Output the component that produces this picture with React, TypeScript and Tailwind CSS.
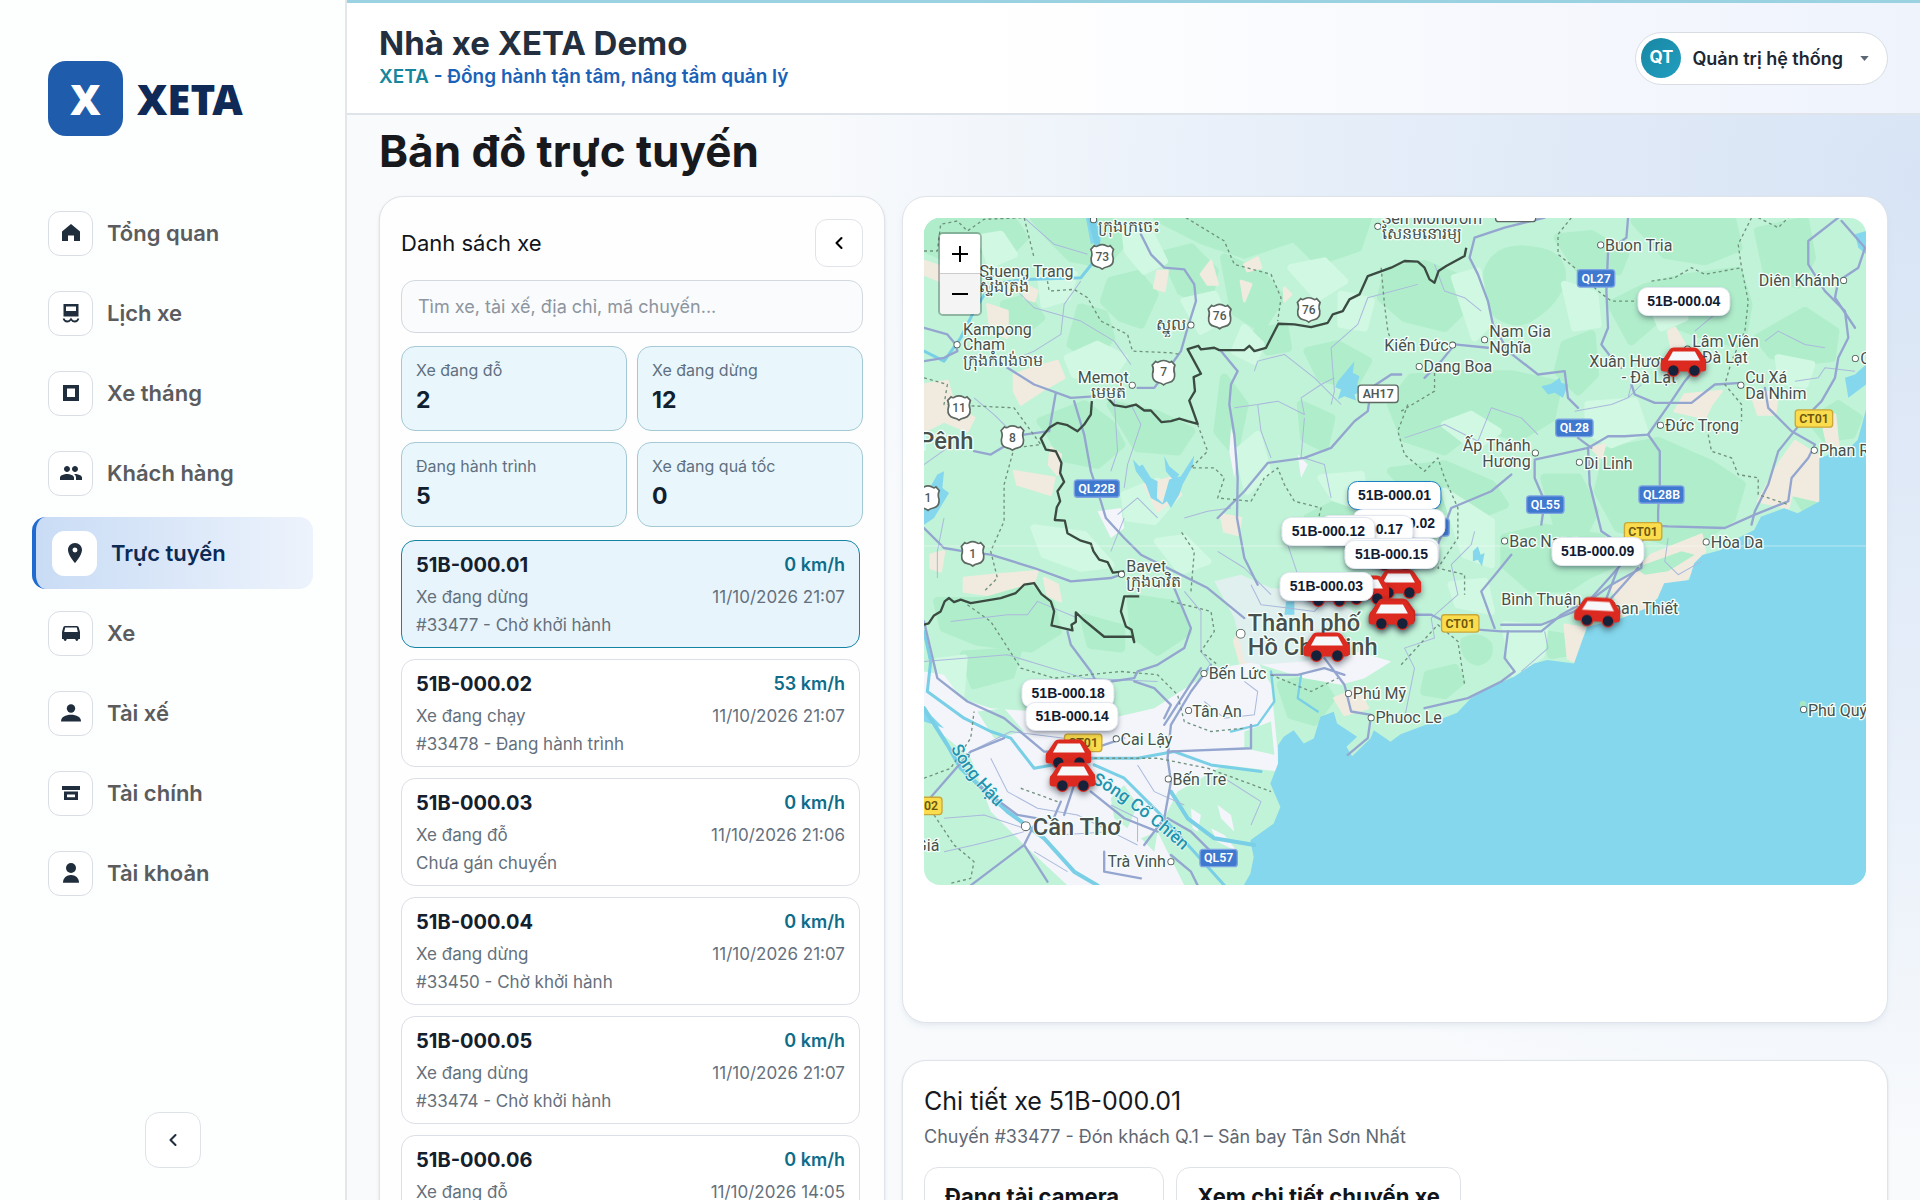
import React, { useState } from 'react';
import { ChevronLeft } from 'lucide-react';
import { MdPeople, MdPlace } from 'react-icons/md';

interface Vehicle {
  plate: string;
  speed: number;
  status: string;
  time: string;
  trip: string;
}

const vehicles: Vehicle[] = [
  { plate: '51B-000.01', speed: 0, status: 'Xe đang dừng', time: '11/10/2026 21:07', trip: '#33477 - Chờ khởi hành' },
  { plate: '51B-000.02', speed: 53, status: 'Xe đang chạy', time: '11/10/2026 21:07', trip: '#33478 - Đang hành trình' },
  { plate: '51B-000.03', speed: 0, status: 'Xe đang đỗ', time: '11/10/2026 21:06', trip: 'Chưa gán chuyến' },
  { plate: '51B-000.04', speed: 0, status: 'Xe đang dừng', time: '11/10/2026 21:07', trip: '#33450 - Chờ khởi hành' },
  { plate: '51B-000.05', speed: 0, status: 'Xe đang dừng', time: '11/10/2026 21:07', trip: '#33474 - Chờ khởi hành' },
  { plate: '51B-000.06', speed: 0, status: 'Xe đang đỗ', time: '11/10/2026 14:05', trip: 'Chưa gán chuyến' },
];

const stats = [
  { label: 'Xe đang đỗ', value: 2 },
  { label: 'Xe đang dừng', value: 12 },
  { label: 'Đang hành trình', value: 5 },
  { label: 'Xe đang quá tốc', value: 0 },
];

const Glyph: React.FC<{ children: React.ReactNode }> = ({ children }) => (
  <svg viewBox="0 0 24 24" className="h-6 w-6" fill="currentColor" aria-hidden="true">
    {children}
  </svg>
);

const navItems = [
  { label: 'Tổng quan', icon: <Glyph><path d="M12 3 3 10.500V20h6v-5.500h6V20h6v-9.500z" /></Glyph> },
  {
    label: 'Lịch xe',
    icon: (
      <Glyph>
        <path fillRule="evenodd" d="M4.5 3h15v12.5h-15zM7 5.5V10h10V5.5z" />
        <path d="M4.500 17.500q1 3 3.700 3 2.300 0 3.800-2.300 1.500 2.300 3.800 2.300 2.700 0 3.700-3" fill="none" stroke="currentColor" strokeWidth="1.800" />
      </Glyph>
    ),
  },
  { label: 'Xe tháng', icon: <Glyph><path fillRule="evenodd" d="M4 4h16v16H4zM8 7.5v8.5h8V7.5z" /></Glyph> },
  { label: 'Khách hàng', icon: <MdPeople className="h-6 w-6" /> },
  { label: 'Trực tuyến', icon: <MdPlace className="h-6 w-6" /> },
  {
    label: 'Xe',
    icon: (
      <Glyph>
        <path fillRule="evenodd" d="M6 5h12a2 2 0 0 1 1.8 1.4L21 11v7h-1.5l-.6 1.2a1.2 1.2 0 0 1-2.2 0L16.200 18H7.800l-.5 1.200a1.200 1.200 0 0 1-2.200 0L4.500 18H3v-7l1.200-4.600A2 2 0 0 1 6 5zm.2 1.600L5.200 11h13.600l-1-4.400z" />
      </Glyph>
    ),
  },
  { label: 'Tài xế', icon: <Glyph><circle cx="12" cy="7.500" r="4.200" /><path d="M2 20.500c0-4.500 4.500-6.700 10-6.700s10 2.200 10 6.700z" /></Glyph> },
  { label: 'Tài chính', icon: <Glyph><path fillRule="evenodd" d="M3 5h18v4H3zM5 10.500h14V19H5zM8 13.500v2.800h8v-2.800z" /></Glyph> },
  { label: 'Tài khoản', icon: <Glyph><circle cx="12" cy="7" r="5" /><path d="M4 21.800c0-5 3.500-7.800 8-7.800s8 2.800 8 7.800z" /></Glyph> },
];

const Logo = () => (
  <div className="flex items-center gap-[14px] pl-4">
    <div className="flex h-[75px] w-[75px] items-center justify-center rounded-[18px] bg-[#1f5cab] font-['Noto_Sans',sans-serif] text-[42px] font-black text-white">
      X
    </div>
    <span className="font-['Noto_Sans',sans-serif] text-[42px] font-black text-[#0f2a56]">XETA</span>
  </div>
);

const Sidebar = () => (
  <aside className="flex h-full w-[347px] shrink-0 flex-col border-r-2 border-[#e3e7ea] bg-[#fdfefe] px-8 pt-[61px] pb-8">
    <Logo />
    <nav className="mt-[61px] flex flex-col gap-2">
      {navItems.map((item) => {
        const active = item.label === 'Trực tuyến';
        return (
          <a
            key={item.label}
            href="#"
            className={`flex h-[72px] items-center gap-[14px] rounded-[14px] pl-4 text-[22px] font-semibold ${
              active
                ? 'border-l-4 border-[#1f6bd0] bg-gradient-to-r from-[#c9dcf5] to-[#edf3fc] text-[#0b2a55]'
                : 'text-[#5a5c5e]'
            }`}
          >
            <span
              className={`flex h-[45px] w-[45px] items-center justify-center rounded-xl border bg-white text-[#1f2d3d] ${
                active ? 'border-white' : 'border-[#d9dee4]'
              }`}
            >
              {item.icon}
            </span>
            {item.label}
          </a>
        );
      })}
    </nav>
    <button
      aria-label="Thu gọn menu"
      className="mt-auto flex h-14 w-14 items-center justify-center self-center rounded-[14px] border border-[#dfe3e7] bg-white text-[#1f2d3d]"
    >
      <ChevronLeft className="h-5 w-5" strokeWidth={2.5} />
    </button>
  </aside>
);

const Header = () => (
  <header className="flex h-[115px] shrink-0 items-center justify-between border-t-[3px] border-b-2 border-t-[#9ad2e2] border-b-[#dfe3ea] bg-gradient-to-r from-white from-40% to-[#eff3fc] px-8">
    <div className="pt-[2px]">
      <div className="text-[33px] leading-9 font-bold text-[#232f3e]">Nhà xe XETA Demo</div>
      <div className="text-[19px] leading-8 font-semibold text-[#1a62b8]">
        <span className="text-[#15869c]">XETA</span> - Đồng hành tận tâm, nâng tầm quản lý
      </div>
    </div>
    <button className="flex h-[53px] items-center gap-[11px] rounded-full border border-[#d8dde4] bg-white pr-[18px] pl-[5px] text-[18px] font-semibold text-[#1c2733]">
      <span className="flex h-10 w-10 items-center justify-center rounded-full bg-gradient-to-br from-[#1787a3] to-[#229ec0] text-[17px] font-bold text-white">
        QT
      </span>
      Quản trị hệ thống
      <svg viewBox="0 0 10 6" className="ml-[6px] h-[5px] w-[9px] fill-[#5b6773]" aria-hidden="true">
        <path d="M0 0h10L5 6z" />
      </svg>
    </button>
  </header>
);

interface VehicleListProps {
  selected: string;
  onSelect: (plate: string) => void;
}

const VehicleList: React.FC<VehicleListProps> = ({ selected, onSelect }) => {
  const [query, setQuery] = useState('');

  return (
    <section className="flex flex-col gap-[13px] rounded-3xl border border-[#dfe3ea] bg-[#fefefe] px-[21px] pt-[22px] pb-6 shadow-sm">
      <div className="flex items-center justify-between">
        <h2 className="text-[22px] text-[#111418]">Danh sách xe</h2>
        <button aria-label="Thu gọn danh sách" className="flex h-12 w-12 items-center justify-center rounded-xl border border-[#e0e3e7] bg-white">
          <ChevronLeft className="h-5 w-5" strokeWidth={2.5} />
        </button>
      </div>
      <input
        type="text"
        aria-label="Tìm xe"
        value={query}
        onChange={(e) => setQuery(e.target.value)}
        placeholder="Tìm xe, tài xế, địa chỉ, mã chuyến..."
        className="h-[53px] w-full rounded-[14px] border border-[#d3d9df] bg-[#f9fbfd] px-4 text-[18px] placeholder:text-[#8d959d]"
      />
      <div className="grid grid-cols-2 gap-x-[10px] gap-y-[11px]">
        {stats.map((stat) => (
          <button key={stat.label} className="flex h-[85px] flex-col gap-1 rounded-[14px] border border-[#a3c9d4] bg-[#e9f7fd] px-[14px] pt-[11px] text-left">
            <span className="text-[16px] leading-6 text-[#5f7080]">{stat.label}</span>
            <span className="text-[23px] leading-7 font-bold text-[#10202e]">{stat.value}</span>
          </button>
        ))}
      </div>
      <ul className="flex flex-col gap-[11px] pr-[3px]">
        {vehicles.map((v) => (
          <li key={v.plate}>
            <button
              onClick={() => onSelect(v.plate)}
              className={`flex w-full flex-col rounded-[14px] border px-[14px] py-[10px] text-left text-[17px] leading-6 text-[#65707d] ${
                v.plate === selected ? 'border-[#1583a3] bg-[#e7f4fc]' : 'border-[#dcdfe7] bg-white'
              }`}
            >
              <span className="flex w-full items-center justify-between leading-7">
                <span className="text-[20px] font-bold text-[#14202c]">{v.plate}</span>
                <span className="text-[18px] font-semibold text-[#0f6c89]">{v.speed} km/h</span>
              </span>
              <span className="mt-[6px] flex w-full justify-between">
                <span>{v.status}</span>
                <span>{v.time}</span>
              </span>
              <span className="mt-1">{v.trip}</span>
            </button>
          </li>
        ))}
      </ul>
    </section>
  );
};

// Map space: one unit is a third of a pixel at the natural 941x667 size.
const MAP_W = 941;
const MAP_H = 667;

interface Place {
  x: number;
  y: number;
  text: string;
  anchor?: 'start' | 'end' | 'middle';
  big?: boolean;
  dot?: [number, number];
}

const places: Place[] = [
  { x: 166, y: 178, text: 'Stueng Trang' },
  { x: 166, y: 224, text: 'ស្ទឹងត្រង់' },
  { x: 522, y: 44, text: 'ក្រុងក្រចេះ', dot: [508, 6] },
  { x: 117, y: 351, text: 'Kampong' },
  { x: 117, y: 398, text: 'Cham', dot: [99, 381] },
  { x: 117, y: 444, text: 'ក្រុងកំពង់ចាម' },
  { x: 694, y: 336, text: 'ស្នួល', dot: [800, 322] },
  { x: 461, y: 495, text: 'Memot', dot: [624, 502] },
  { x: 499, y: 540, text: 'មេមត់' },
  { x: -14, y: 694, text: 'Pênh', big: true },
  { x: 1372, y: 20, text: 'Sen Monorom', dot: [1360, 26] },
  { x: 1372, y: 64, text: 'សែនមនោរម្យ' },
  { x: 2041, y: 99, text: 'Buon Tria', dot: [2028, 82] },
  { x: 2744, y: 206, text: 'Diên Khánh', anchor: 'end', dot: [2756, 188] },
  { x: 1694, y: 359, text: 'Nam Gia', dot: [1680, 366] },
  { x: 1694, y: 406, text: 'Nghĩa' },
  { x: 1572, y: 400, text: 'Kiến Đức', anchor: 'end', dot: [1584, 382] },
  { x: 1497, y: 464, text: 'Dang Boa', dot: [1484, 446] },
  { x: 1994, y: 447, text: 'Xuân Hương' },
  { x: 2254, y: 496, text: '- Đà Lạt', anchor: 'end' },
  { x: 2302, y: 387, text: 'Lâm Viên', dot: [2288, 394] },
  { x: 2331, y: 436, text: 'Đà Lạt' },
  { x: 2461, y: 496, text: 'Cu Xá', dot: [2448, 502] },
  { x: 2461, y: 543, text: 'Da Nhim' },
  { x: 2806, y: 440, text: 'Cam', dot: [2791, 422] },
  { x: 2221, y: 640, text: 'Đức Trọng', dot: [2207, 622] },
  { x: 2682, y: 715, text: 'Phan Rang', dot: [2668, 697] },
  { x: 1818, y: 698, text: 'Ấp Thánh', anchor: 'end', dot: [1832, 705] },
  { x: 1818, y: 748, text: 'Hương', anchor: 'end' },
  { x: 1978, y: 752, text: 'Di Linh', dot: [1964, 733] },
  { x: 1754, y: 987, text: 'Bac Nang', dot: [1740, 969] },
  { x: 2358, y: 991, text: 'Hòa Da', dot: [2344, 972] },
  { x: 1730, y: 1160, text: 'Bình Thuận' },
  { x: 2260, y: 1187, text: 'Phan Thiết', anchor: 'end' },
  { x: 2649, y: 1492, text: 'Phú Quý', dot: [2636, 1474] },
  { x: 606, y: 1063, text: 'Bavet', dot: [592, 1069] },
  { x: 606, y: 1108, text: 'ក្រុងបាវិត' },
  { x: 970, y: 1238, text: 'Thành phố', big: true, dot: [949, 1247] },
  { x: 970, y: 1310, text: 'Hồ Chí Minh', big: true },
  { x: 853, y: 1384, text: 'Bến Lức', dot: [839, 1366] },
  { x: 804, y: 1495, text: 'Tân An', dot: [793, 1477] },
  { x: 1285, y: 1442, text: 'Phú Mỹ', dot: [1272, 1426] },
  { x: 1353, y: 1514, text: 'Phuoc Le', dot: [1340, 1499] },
  { x: 589, y: 1579, text: 'Cai Lậy', dot: [576, 1562] },
  { x: 745, y: 1699, text: 'Bến Tre', dot: [732, 1682] },
  { x: 326, y: 1850, text: 'Cần Thơ', big: true, dot: [305, 1824] },
  { x: 725, y: 1947, text: 'Trà Vinh', anchor: 'end', dot: [740, 1930] },
  { x: 46, y: 1899, text: 'Giá', anchor: 'end' },
];

const shields: { x: number; y: number; text: string; kind: 'blue' | 'yellow' | 'white' | 'us' }[] = [
  { x: 534, y: 117, text: '73', kind: 'us' },
  { x: 886, y: 296, text: '76', kind: 'us' },
  { x: 1153, y: 276, text: '76', kind: 'us' },
  { x: 718, y: 464, text: '7', kind: 'us' },
  { x: 105, y: 570, text: '11', kind: 'us' },
  { x: 265, y: 660, text: '8', kind: 'us' },
  { x: 12, y: 840, text: '1', kind: 'us' },
  { x: 146, y: 1007, text: '1', kind: 'us' },
  { x: 1361, y: 528, text: 'AH17', kind: 'white' },
  { x: 1773, y: -14, text: 'AH17', kind: 'white' },
  { x: 518, y: 812, text: 'QL22B', kind: 'blue' },
  { x: 2014, y: 182, text: 'QL27', kind: 'blue' },
  { x: 1949, y: 630, text: 'QL28', kind: 'blue' },
  { x: 2210, y: 830, text: 'QL28B', kind: 'blue' },
  { x: 1862, y: 860, text: 'QL55', kind: 'blue' },
  { x: 1518, y: 928, text: 'QL20', kind: 'blue' },
  { x: 883, y: 1919, text: 'QL57', kind: 'blue' },
  { x: 2667, y: 602, text: 'CT01', kind: 'yellow' },
  { x: 2155, y: 940, text: 'CT01', kind: 'yellow' },
  { x: 1607, y: 1216, text: 'CT01', kind: 'yellow' },
  { x: 477, y: 1574, text: 'CT01', kind: 'yellow' },
  { x: -2, y: 1763, text: 'CT02', kind: 'yellow' },
];

const Shield: React.FC<(typeof shields)[number]> = ({ x, y, text, kind }) => {
  if (kind === 'us') {
    return (
      <g transform={`translate(${x} ${y})`}>
        <path
          d="M-24-33Q-18-28-12-33Q-6-36 0-36Q6-36 12-33Q18-28 24-33L34-22Q28-10 33 4Q35 26 16 30Q6 32 0 37Q-6 32-16 30Q-35 26-33 4Q-28-10-34-22Z"
          fill="#fff"
          stroke="#5d6862"
          strokeWidth="5"
        />
        <text y="12" textAnchor="middle" fontSize="36" fontWeight="500" fill="#4f5a56">{text}</text>
      </g>
    );
  }
  const w = kind === 'white' ? 120 : text.length * 23 + 20;
  const fill = kind === 'blue' ? '#3f78cf' : kind === 'yellow' ? '#fbdc4c' : '#fff';
  const edge = kind === 'blue' ? '#7ea4e4' : kind === 'yellow' ? '#c9a83a' : '#5d6862';
  const ink = kind === 'blue' ? '#fff' : kind === 'yellow' ? '#6b560e' : '#4f5a56';
  return (
    <g transform={`translate(${x} ${y})`}>
      <rect x={-w / 2} y={-26} width={w} height={52} rx={9} fill={fill} stroke={edge} strokeWidth="4" />
      <text y="13" textAnchor="middle" fontSize="37" fontWeight="600" fill={ink}>{text}</text>
    </g>
  );
};

const MapCanvas = () => (
  <svg
    viewBox="0 0 2823 2001"
    preserveAspectRatio="xMidYMid slice"
    className="block h-[667px] w-full font-[Roboto,'Noto_Sans',sans-serif]"
    role="img"
    aria-label="Bản đồ miền Nam"
  >
    <rect width="2823" height="2001" fill="#c1f3d8" />

    {/* terrain, darker */}
    <g fill="#b0eecb" stroke="#b0eecb" strokeWidth="26" strokeLinejoin="round">
      <path d="M0 0H260L300 60 250 110 160 90 90 130 0 90Z" />
      <path d="M330 0H560L600 70 540 140 440 120 380 60Z" />
      <path d="M700 0H1330L1300 90 1180 130 1110 60 960 110 840 70Z" />
      <path d="M560 190 640 170 690 230 650 320 590 300 540 250Z" />
      <path d="M240 260 310 240 350 300 300 340 250 330Z" />
      <path d="M470 270 540 290 560 360 510 420 440 380Z" />
      <path d="M720 110 800 90 870 160 850 260 770 220Z" />
      <path d="M900 120 1010 170 1070 240 1010 330 930 280Z" />
      <path d="M1000 340 1080 330 1090 390 1030 400Z" />
      <path d="M350 610 480 560 560 620 590 680 520 740 420 720 380 650Z" />
      <path d="M560 560 700 590 800 640 760 700 640 690Z" />
      <path d="M900 480 960 560 930 700 880 640Z" />
      <path d="M1130 560 1220 600 1200 690 1140 660Z" />
      <path d="M1150 400 1240 380 1330 430 1290 500 1190 480Z" />
      <path d="M1390 160 1500 140 1600 180 1640 250 1560 330 1440 300 1370 240Z" />
      <path d="M1690 160Q1720 80 1830 100Q1920 110 1910 190Q1890 250 1830 290Q1780 330 1720 290Q1670 240 1690 160Z" />
      <path d="M1460 480 1600 470 1760 470 1900 500 1880 600 1780 660 1660 620 1560 700 1440 660 1400 560Z" />
      <path d="M1900 60 2000 50 2100 110 2080 160 1960 150Z" />
      <path d="M2060 260 2160 210 2280 180 2440 160 2470 260 2450 380 2330 350 2200 300 2120 370Z" />
      <path d="M2130 10 2420 0 2440 90 2340 130 2220 110Z" />
      <path d="M2500 40 2640 10 2660 120 2620 200 2530 180Z" />
      <path d="M2500 360 2640 280 2730 340 2720 420 2620 430 2540 410Z" />
      <path d="M1920 380 2000 350 2010 470 1960 520 1900 460Z" />
      <path d="M2050 700 2200 670 2360 740 2450 800 2420 900 2330 960 2230 970 2080 930 2020 820Z" />
      <path d="M1860 780 1960 780 2010 880 1980 940 1900 930Z" />
      <path d="M1400 760 1560 740 1700 800 1740 860 1640 900 1500 860Z" />
      <path d="M1740 960 1860 930 2030 960 2080 1030 1990 1070 1930 1110 1820 1110 1740 1040Z" />
      <path d="M1620 1270Q1660 1250 1690 1280Q1700 1320 1660 1330Q1620 1320 1620 1270Z" />
      <path d="M1870 1250 1930 1260 1940 1300 1880 1310Z" />
      <path d="M1510 1370 1590 1350 1610 1390 1560 1430 1500 1420Z" />
      <path d="M40 1150 180 1150 300 1100 380 1160 400 1240 320 1290 160 1270 60 1230Z" />
      <path d="M480 1200 590 1230 590 1290 500 1280Z" />
      <path d="M120 1310 280 1300 260 1370 150 1400Z" />
      <path d="M620 1140 760 1160 790 1240 700 1300 630 1250Z" />
      <path d="M1070 1400 1180 1380 1220 1440 1170 1510 1100 1490Z" />
      <path d="M1150 900 1230 860 1300 900 1240 950Z" />
      <path d="M2660 610 2740 560 2800 600 2780 650 2700 660Z" />
      <path d="M2615 830 2650 810 2670 840 2640 870Z" />
    </g>

    {/* terrain, lighter */}
    <g fill="#d1f8e2" stroke="#d1f8e2" strokeWidth="22" strokeLinejoin="round">
      <path d="M170 60 230 50 270 110 200 140Z" />
      <path d="M600 20 680 50 720 130 660 160 610 100Z" />
      <path d="M350 180 450 170 430 240 360 260Z" />
      <path d="M780 250 870 230 900 300 830 340Z" />
      <path d="M430 420 520 380 600 420 560 480 450 470Z" />
      <path d="M960 330 1010 380 990 430 930 400Z" />
      <path d="M1100 150 1200 130 1260 190 1180 240Z" />
      <path d="M1250 230 1340 250 1320 330 1250 320Z" />
      <path d="M600 830 700 790 760 830 690 910 610 900Z" />
      <path d="M940 700 1000 650 1030 760 970 820Z" />
      <path d="M1190 780 1310 770 1320 870 1230 840Z" />
      <path d="M1590 180 1660 160 1690 320 1650 360Z" />
      <path d="M1560 620 1640 590 1720 640 1650 690Z" />
      <path d="M1920 200 2010 230 2020 320 1950 330Z" />
      <path d="M1990 560 2130 550 2160 640 2060 680 1990 640Z" />
      <path d="M2180 260 2240 240 2280 300 2210 330Z" />
      <path d="M2560 420 2660 440 2640 500 2570 490Z" />
      <path d="M1560 820 1700 910 1700 1040 1620 1010Z" />
      <path d="M1580 1100 1680 1090 1700 1180 1600 1160Z" />
      <path d="M1740 1220 1860 1230 1850 1310 1770 1370Z" />
      <path d="M330 930 480 950 560 1040 470 1050 360 1010Z" />
      <path d="M40 1330 120 1320 110 1440 40 1430Z" />
      <path d="M700 970 780 960 850 1030 770 1060Z" />
    </g>

    {/* sand */}
    <g fill="#f1ebdf" stroke="#f1ebdf" strokeWidth="8" strokeLinejoin="round">
      <path d="M0 500 70 490 90 560 150 600 130 640 60 610 0 640Z" />
      <path d="M0 130 60 150 50 190 0 170Z" />
      <path d="M190 260 250 280 250 360 200 340Z" />
      <path d="M300 200 340 220 330 250 300 240Z" />
      <path d="M270 470 330 450 400 430 420 480 350 520 290 560 270 520Z" />
      <path d="M700 160 730 160 720 220 690 210Z" />
      <path d="M830 170 860 130 880 200 850 200Z" />
      <path d="M960 140 1000 120 1010 150 970 160Z" />
      <path d="M950 190 980 200 960 250Z" />
      <path d="M1080 210 1100 230 1080 250Z" />
      <path d="M270 760 390 780 380 830 280 800Z" />
      <path d="M380 690 410 710 400 770 375 740Z" />
      <path d="M20 1010 60 1000 50 1060 20 1050Z" />
      <path d="M120 1080 220 1070 340 1060 330 1090 190 1130 120 1120Z" />
      <path d="M360 1080 400 1100 410 1150 370 1130Z" />
      <path d="M660 800 740 780 770 830 700 880Z" />
      <path d="M2230 340 2250 330 2280 380 2240 390Z" />
      <path d="M2390 520 2360 560 2340 600 2250 580 2280 530Z" />
      <path d="M2480 530 2560 520 2550 590 2500 590Z" />
      <path d="M2610 670 2690 720 2685 850 2600 830 2590 870 2500 850 2560 740Z" />
      <path d="M2000 690 2040 680 2030 720Z" />
      <path d="M2690 600 2730 590 2740 690 2710 690Z" />
      <path d="M2180 1010 2330 950 2340 1000 2280 1090 2200 1160 2100 1200 2060 1110 2130 1060Z" />
      <path d="M1920 1220 1980 1230 1950 1330 1930 1320Z" />
      <path d="M930 1270 960 1200 1000 1330 950 1340Z" />
      <path d="M890 890 950 900 940 950 900 940Z" />
      <path d="M1230 1440 1300 1410 1330 1470 1260 1490Z" />
    </g>
    <path d="M2130 1050 2270 1000 2310 1010 2230 1060 2160 1070Z" fill="#b0eecb" />

    {/* built-up delta */}
    <path
      d="M0 1360 60 1370 110 1440 200 1470 330 1480 420 1500 560 1500 690 1470 800 1400 880 1350 1000 1330 1040 1400 1060 1600 1061 1660 900 1640 760 1720 700 1840 780 2001 430 2001 300 1880 200 1780 140 1620 0 1500Z"
      fill="#f3f5fa"
    />
    <path d="M870 1090 950 1070 1040 1110 1180 1120 1290 1180 1200 1330 1060 1350 960 1330 930 1200Z" fill="#e0f0ee" />
    <g fill="#f3f5fa">
      <path d="M520 880 590 870 600 930 560 960Z" />
      <path d="M920 630 940 700 930 780 915 700Z" />
      <path d="M1120 710 1150 740 1130 780Z" />
      <path d="M1010 1340 1140 1330 1300 1300 1400 1330 1320 1380 1250 1400 1140 1380Z" />
    </g>
    <g fill="#c1f3d8">
      <path d="M560 1740 600 1700 640 1760 610 1830 570 1800Z" />
      <path d="M790 1730 850 1760 930 1760 960 1800 870 1860 790 1830Z" />
      <path d="M160 1480 240 1470 300 1540 210 1560Z" />
      <path d="M650 1860 700 1840 690 1900Z" />
      <path d="M960 1540 1040 1510 1050 1610 960 1590Z" />
    </g>
    <g fill="#f3f5fa">
      <path d="M800 1770 830 1790 820 1840 805 1830Z" />
      <path d="M880 1760 920 1790 930 1840 890 1800Z" />
      <path d="M860 1830 900 1850 940 1900 880 1870Z" />
    </g>

    {/* sea */}
    <path
      d="M2823 576 2798 666 2778 686 2683 721V851L2618 886 2578 871 2508 896 2488 936 2428 966 2388 996 2333 1011 2308 1036 2293 1086 2218 1096 2198 1141 2163 1171 2088 1201 1988 1226 1973 1266 1948 1336 1868 1326 1828 1336 1768 1376 1698 1406 1638 1441 1598 1484 1528 1511 1428 1548 1398 1571 1348 1536 1338 1561 1283 1614 1266 1586 1298 1556 1238 1516 1228 1481 1188 1496 1168 1561 1138 1576 1108 1536 1078 1556 1061 1581V1636L1038 1696 1068 1766 1048 1816 978 1866 988 1916 978 1966 958 2001H2823Z"
      fill="#84d7ec"
    />
    <g fill="#84d7ec">
      <path d="M2823 440 2790 470 2760 480 2770 540 2823 500Z" />
      <path d="M2823 40 2790 50 2800 90 2823 110Z" />
      <path d="M1240 490 1290 430 1285 465 1305 475 1298 500 1322 515 1290 530 1295 548 1260 535 1240 545 1250 515 1232 508Z" />
      <path d="M1850 505 1880 498 1905 480 1910 495 1930 500 1915 540 1890 525 1870 530Z" />
      <path d="M0 1470 30 1500 60 1530 0 1510Z" />
      <path d="M485 0H520L530 70 500 80Z" />
      <path d="M40 770 60 760 55 810 75 825 30 900 0 920V840Z" />
      <path d="M1645 1000 1660 985 1668 1010 1680 1005 1672 1045 1660 1025 1645 1030Z" />
      <path d="M1085 1150 1110 1150 1110 1190 1080 1190Z" />
      <path d="M626 725 645 745 655 740 680 780 700 790 698 840 715 855 735 785 770 775 810 712 805 745 775 800 765 830 740 870 728 850 715 860 680 840 665 800 635 760Z" />
      <path d="M720 715 735 745 765 770 750 790 725 760Z" />
    </g>
    <circle cx="2634" cy="1458" r="10" fill="#a5e8c4" />

    {/* rivers */}
    <g fill="none" stroke="#79cfe6" strokeLinecap="round" strokeLinejoin="round">
      <path strokeWidth="18" d="M500 0 520 80" />
      <path strokeWidth="9" d="M520 80 510 130 470 180 300 185 200 200 150 280 110 360 60 430 0 400" />
      <path strokeWidth="9" d="M0 1240 20 1330 10 1420 120 1500 200 1540 260 1560 330 1650 500 1620 640 1620 750 1600 860 1640 1010 1660" />
      <path strokeWidth="12" d="M0 1470 70 1580 110 1650 250 1780 360 1860 450 1960 520 2001" />
      <path strokeWidth="9" d="M510 1640 600 1680 700 1780 800 1890 900 2001" />
      <path strokeWidth="12" d="M740 1720 790 1800 870 1860 990 1880" />
      <path strokeWidth="7" d="M1040 1360 1050 1450 1000 1520 920 1540M1130 1370 1120 1440 1180 1480" />
    </g>

    {/* minor roads */}
    <g fill="none" stroke="#aab9dc" strokeWidth="3" strokeLinejoin="round">
      <path d="M300 0 390 80 490 110" />
      <path d="M470 190 420 260 410 350 330 400 260 430" />
      <path d="M260 200 330 270 470 310 570 370 620 440" />
      <path d="M570 540 580 700 560 760M620 560 650 620 610 740 600 810" />
      <path d="M150 540 210 590 260 640M0 740 70 690" />
      <path d="M1220 560 1230 520 1220 390 1300 320 1330 240 1480 200" />
      <path d="M930 570 1000 560 1060 550 1140 590 1130 540 1190 500 1230 480" />
      <path d="M990 460 1000 430 1080 410 1170 480 1250 560M1000 560 1010 640 1040 720" />
      <path d="M1140 720 1200 740 1220 840M1130 720 1140 600" />
      <path d="M1530 140 1560 220 1620 240 1670 280M1440 660 1560 620 1660 670 1700 570 1790 600 1840 650" />
      <path d="M1950 580 2060 560 2110 540 2120 500M2110 540 2150 500" />
      <path d="M2310 340 2370 290M2520 370 2560 340 2640 380 2700 390" />
      <path d="M2610 490 2680 480 2700 450 2790 460" />
      <path d="M80 1210 250 1190 310 1190 340 1150 460 1200" />
      <path d="M40 1080 40 1000 60 900M0 1330 250 1310 480 1380 700 1390" />
      <path d="M780 1120 830 1180 830 1300 860 1340M880 1000 960 1050 1040 1130" />
      <path d="M1440 1500 1470 1350 1440 1290 1530 1260 1520 1200 1600 1130 1580 1040 1640 980 1650 940" />
      <path d="M980 1100 1010 1160 1090 1170 1170 1180 1200 1150M1080 950 1120 1070 1100 1130" />
      <path d="M580 890 640 840 700 900M600 900 560 1000M780 900 850 880 920 870" />
      <path d="M2230 960 2220 1030 2260 1070 2330 1030" />
      <path d="M1790 1360 1870 1290 1860 1240" />
      <path d="M160 1590 260 1540 420 1560M200 1620 250 1720 340 1770 460 1790 540 1830" />
      <path d="M60 1800 180 1790 300 1830M400 1850 560 1840 640 1880M330 1900 430 1960" />
      <path d="M640 1640 690 1720 780 1760M560 1760 640 1800 640 1870M900 1680 1010 1750 980 1820" />
      <path d="M840 1450 900 1500 990 1490 1000 1420 960 1390" />
      <path d="M60 1900 150 1880 230 1860 300 1840" />
    </g>

    {/* main roads */}
    <g fill="none" stroke="#94a6cf" strokeWidth="7" strokeLinejoin="round" strokeLinecap="round">
      <path d="M650 50 680 110 720 150 780 155 810 200 815 250 790 330 770 400 720 470 690 510 640 510" />
      <path d="M0 330 70 350 95 380 100 400 60 420 0 430" />
      <path d="M250 450 330 500 440 540 520 535M395 525 375 640 300 650 200 710 150 700" />
      <path d="M450 550 480 650 500 760 530 850 545 900 600 960 650 1010 750 1060 850 1110 960 1200" />
      <path d="M890 400 940 460 920 500 915 560 930 650 940 780 938 900 960 1020 1000 1100" />
      <path d="M880 900 960 820 1030 735 1140 720 1220 690 1290 610 1330 580 1340 510 1400 470 1430 470" />
      <path d="M0 930 60 990 120 1000 200 1010 330 1050 440 1090 560 1080 590 1070" />
      <path d="M1860 0 1740 30 1650 60 1635 120 1660 170 1690 250 1705 320 1750 400 1840 470 1920 460 1930 540 1960 570" />
      <path d="M2110 0 2105 60 2050 100 2045 220 2050 330 2030 380 2060 420 2090 450" />
      <path d="M1500 480 1550 430 1590 380 1690 390" />
      <path d="M2330 430 2280 490 2240 550 2170 650 2100 655 2050 655 1990 690 1900 710 1830 725" />
      <path d="M2120 500 2130 530 2190 555 2300 555 2370 500 2450 495M1960 660 2000 690M2170 650 2205 700 2205 800 2200 880 2200 960" />
      <path d="M1830 730 1830 780 1860 850 1850 920M1990 690 1995 800 2010 860 2030 940 2060 960" />
      <path d="M2740 0 2650 70 2650 140 2700 220 2760 280 2770 360 2740 420 2730 480 2690 550 2640 600 2560 700 2530 800 2490 880 2480 920" />
      <path d="M2750 10 2820 90 2800 150 2740 190 2730 240 2790 330M2520 510 2530 570 2600 640 2670 680 2650 720 2600 780 2590 850 2490 890 2400 930 2230 925 2140 920" />
      <path d="M2150 950 2150 1050 2060 1100 1950 1180 1850 1220 1730 1220M2080 1050 2030 1180M2140 1050 2060 1140" />
      <path d="M1450 1190 1520 1190 1600 1230 1730 1240 1850 1240 1910 1190 2000 1140 2160 960" />
      <path d="M1480 1000 1540 980 1580 870 1700 820 1760 770M1710 1230 1670 1120 1720 1060 1760 1010M1750 1240 1740 1320 1770 1360 1730 1390 1630 1440 1500 1470" />
      <path d="M430 1240 440 1280 500 1360 520 1400M750 1110 800 1230 780 1290 700 1340 640 1360 630 1380 560 1390" />
      <path d="M860 1340 800 1420 740 1520 730 1620 740 1690 720 1800 660 1880M830 1350 720 1520" />
      <path d="M630 1390 690 1410 740 1460 720 1500M730 1600 980 1590 980 1520" />
      <path d="M0 1210 40 1380 130 1450 240 1500 360 1600 480 1600 600 1560" />
      <path d="M0 1760 140 1600 240 1560M160 1700 280 1790 340 1800 380 1820 420 1840" />
      <path d="M140 2001 300 1880 330 1820M300 1880 370 1990M410 1750 380 1820M450 1700 420 1790M500 1720 600 1800 700 1840" />
      <path d="M1200 1320 1260 1400 1280 1480 1340 1490 1330 1560 1270 1610M1040 1370 1120 1370 1200 1350 1260 1370" />
      <path d="M540 1900 540 1960 650 1980M740 1910 800 1960 820 2001M730 1800 800 1840 860 1900" />
    </g>

    {/* province lines */}
    <g fill="none" stroke="#71917f" strokeWidth="4" strokeDasharray="9 9" strokeLinejoin="round">
      <path d="M0 100 40 100 50 20 100 10 130 40 180 5 300 0 330 120" />
      <path d="M370 190 375 220 450 215 490 240 530 310 610 350 625 400 740 405 770 410" />
      <path d="M785 0 900 70 930 140 1040 170 1070 240 1060 310" />
      <path d="M1370 150 1380 260 1390 340 1400 370" />
      <path d="M0 480 70 500 60 560 270 570 350 680 270 690 240 800 240 910 200 1000 220 1080 180 1120" />
      <path d="M820 620 850 700 800 750 870 750 900 780 880 840 980 850 1020 780 1060 750 1080 800 1110 850 1190 870 1180 910" />
      <path d="M1450 560 1420 640 1440 710 1500 760 1540 720 1560 780 1600 870 1600 960 1540 1050 1620 1070 1620 1130" />
      <path d="M1940 0 1900 50 1900 110 1950 150 2020 220 2060 250 2130 250M2180 190 2250 180 2300 150 2340 170 2450 150 2470 250 2460 340 2420 430 2400 500 2450 560 2450 610" />
      <path d="M2350 650 2360 700 2420 720 2440 770 2500 780 2500 830 2590 860M2480 0 2440 80 2450 150M2500 0 2560 30 2590 0" />
      <path d="M1430 580 1530 520 1530 440M1430 1340 1540 1220 1600 1270 1620 1400" />
      <path d="M130 1160 200 1210 290 1350 390 1380 590 1360 700 1370 760 1430 780 1510 860 1540 960 1530" />
      <path d="M740 1150 860 1180 870 1240 830 1300 880 1340M800 1120 810 1000 770 940" />
      <path d="M0 1680 80 1650 140 1560 150 1480M30 1790 90 1880 150 1930 140 1980 80 1995" />
      <path d="M510 1620 700 1620 850 1650 1040 1720M290 1710 400 1750M1040 1370 1160 1420 1240 1380" />
    </g>

    {/* national border */}
    <path
      d="M0 1220 14 1216 30 1192 50 1180 62 1150 75 1140 90 1152 110 1145 140 1155 230 1140 275 1125 300 1100 330 1095 352 1128 380 1150 390 1180 382 1222 445 1237 442 1220 455 1212 455 1183 478 1205 540 1256 625 1256 630 1272 622 1235 605 1225 590 1180 600 1135 645 1135 M600 1060 566 1064 550 1032 525 1025 508 1000 500 977 470 968 430 946 422 908 392 906 398 868 408 850 400 820 420 792 408 765 412 735 395 700 365 695 350 662 375 630 400 615 430 622 460 640 480 620 500 590 503 550M550 540 570 562 605 568 635 560 660 578 680 578 712 613 740 610 765 602 790 610 820 618 795 548 812 520 808 478 830 468 790 394 822 384 830 395 870 390 885 397 960 397 975 384 990 400 1025 390 1030 380 1062 318 1110 320 1160 328 1210 315 1225 290 1255 280 1275 245 1305 230 1330 175 1400 150 1440 130 1480 132 1500 150 1515 185 1530 195 1542 160 1565 145 1620 115 1625 90"
      fill="none"
      stroke="#3b4b42"
      strokeWidth="7"
      strokeLinejoin="round"
    />

    <path d="M0 984H2823" stroke="#ffffff" strokeOpacity="0.45" strokeWidth="3" />

    <g fontSize="52" fontWeight="500" stroke="#e8fafd" strokeWidth="4" paintOrder="stroke">
      <path id="songHau" d="M80 1590Q130 1690 260 1806" fill="none" stroke="none" />
      <path id="songCoChien" d="M502 1694Q600 1740 790 1910" fill="none" stroke="none" />
      <text fill="#2193ad"><textPath href="#songHau">Sông Hậu</textPath></text>
      <text fill="#2193ad"><textPath href="#songCoChien">Sông Cổ Chiên</textPath></text>
    </g>

    <g fill="#47504c" stroke="#f4fff9" strokeWidth="8" paintOrder="stroke" strokeLinejoin="round">
      {places.map((p) => (
        <g key={`${p.text}${p.x}`}>
          {p.dot && (
            <circle cx={p.dot[0]} cy={p.dot[1]} r={p.big ? 12 : 8} fill="#fff" stroke="#47544e" strokeWidth="5" />
          )}
          <text x={p.x} y={p.y} textAnchor={p.anchor} fontSize={p.big ? 71 : 48} fontWeight={p.big ? 500 : 400}>
            {p.text}
          </text>
        </g>
      ))}
    </g>

    {shields.map((s) => (
      <Shield key={`${s.text}${s.x}`} {...s} />
    ))}
  </svg>
);

const CarIcon: React.FC<{ tilted?: boolean }> = ({ tilted }) => (
  <svg viewBox="0 0 46 30" className={`h-[30px] w-[46px] drop-shadow-[0_3px_3px_rgba(15,23,42,0.5)] ${tilted ? 'rotate-3' : ''}`} aria-hidden="true">
    <path d="M8.500 3.500Q10 .5 14 .5H33Q37 .5 39 3.500L43.500 10Q46 12 46 16V21Q46 24.500 42 24.500H4Q0 24.500 0 21V17Q0 14 2.500 12.500Z" fill="#dc2a20" />
    <circle cx="13" cy="23.500" r="6.500" fill="#dc2a20" />
    <circle cx="34" cy="23.500" r="6.500" fill="#dc2a20" />
    <path d="M12.500 4.500H34.500L39.500 13.500H7.500Z" fill="#f6f8fa" />
    <circle cx="13" cy="23.500" r="5.200" fill="#16213a" />
    <circle cx="34" cy="23.500" r="5.200" fill="#16213a" />
  </svg>
);

const pins = [
  { plate: '51B-000.01', x: 470, y: 263 },
  { plate: '51B-000.02', x: 474, y: 291 },
  { plate: '51B-000.17', x: 442, y: 297 },
  { plate: '51B-000.12', x: 404, y: 299 },
  { plate: '51B-000.05', x: 468, y: 320 },
  { plate: '51B-000.15', x: 467, y: 322 },
  { plate: '51B-000.03', x: 402, y: 354 },
  { plate: '51B-000.04', x: 759, y: 69 },
  { plate: '51B-000.09', x: 673, y: 319, tilted: true },
  { plate: '51B-000.18', x: 144, y: 461 },
  { plate: '51B-000.14', x: 148, y: 484 },
];

const MapPanel: React.FC<{ selected: string }> = ({ selected }) => (
  <section className="h-[827px] rounded-3xl border border-[#dfe3ea] bg-white p-[21px] shadow-md shadow-slate-300/30">
    <div className="relative overflow-hidden rounded-2xl">
      <MapCanvas />
      {pins.map((pin) => (
        <div
          key={pin.plate}
          className="absolute flex -translate-x-1/2 flex-col items-center gap-[31px]"
          style={{ left: `${(pin.x / MAP_W) * 100}%`, top: `${(pin.y / MAP_H) * 100}%` }}
        >
          <span
            className={`rounded-[10px] border bg-white px-[9px] font-['Liberation_Sans',sans-serif] text-[14px] leading-[27px] font-bold whitespace-nowrap text-[#111c33] shadow-md shadow-slate-900/30 ${
              pin.plate === selected ? 'border-[#1c7ec4]' : 'border-slate-200'
            }`}
          >
            {pin.plate}
          </span>
          <CarIcon tilted={pin.tilted} />
        </div>
      ))}
      <div className="absolute top-[14px] left-[14px] flex flex-col overflow-hidden rounded-[5px] border-2 border-black/25 bg-clip-padding">
        <button aria-label="Phóng to" className="flex h-10 w-10 items-center justify-center border-b border-[#ccc] bg-white">
          <svg viewBox="0 0 16 16" className="h-4 w-4 stroke-black" strokeWidth="2"><path d="M8 0v16M0 8h16" /></svg>
        </button>
        <button aria-label="Thu nhỏ" className="flex h-10 w-10 items-center justify-center bg-[#f4f4f4]">
          <svg viewBox="0 0 16 16" className="h-4 w-4 stroke-black" strokeWidth="2"><path d="M0 8h16" /></svg>
        </button>
      </div>
    </div>
  </section>
);

const DetailPanel = () => (
  <section className="rounded-3xl border border-[#dfe3ea] bg-white px-[21px] pt-[22px] pb-8 shadow-sm">
    <h2 className="text-[25px] leading-9 text-[#16191d]">Chi tiết xe 51B-000.01</h2>
    <p className="mt-1 text-[18px] leading-7 text-[#5f6772]">Chuyến #33477 - Đón khách Q.1 – Sân bay Tân Sơn Nhất</p>
    <div className="mt-4 flex gap-3">
      <button className="h-[58px] rounded-[14px] border border-[#dfe3e7] bg-white pr-11 pl-5 text-[22px] font-bold text-[#111418]">Đang tải camera</button>
      <button className="h-[58px] rounded-[14px] border border-[#dfe3e7] bg-white px-5 text-[22px] font-bold text-[#111418]">Xem chi tiết chuyến xe</button>
    </div>
  </section>
);

const App: React.FC = () => {
  const [selected, setSelected] = useState('51B-000.01');

  return (
    <div className="flex h-screen overflow-hidden bg-[#f8fafc] font-[Inter,'Noto_Sans',sans-serif]">
      <Sidebar />
      <div className="flex min-w-0 flex-1 flex-col bg-[radial-gradient(ellipse_70%_80%_at_100%_15%,#d8e4f5_0%,#e6eef9_55%,#f8fafc_100%)]">
        <Header />
        <main className="min-h-0 flex-1 overflow-hidden px-8 pt-2">
          <h1 className="text-[44px] leading-[56px] font-bold text-[#17191d]">Bản đồ trực tuyến</h1>
          <div className="mt-[17px] grid grid-cols-[506px_minmax(0,1fr)] items-start gap-[17px]">
            <VehicleList selected={selected} onSelect={setSelected} />
            <div className="flex flex-col gap-[37px]">
              <MapPanel selected={selected} />
              <DetailPanel />
            </div>
          </div>
        </main>
      </div>
    </div>
  );
};

export default App;
